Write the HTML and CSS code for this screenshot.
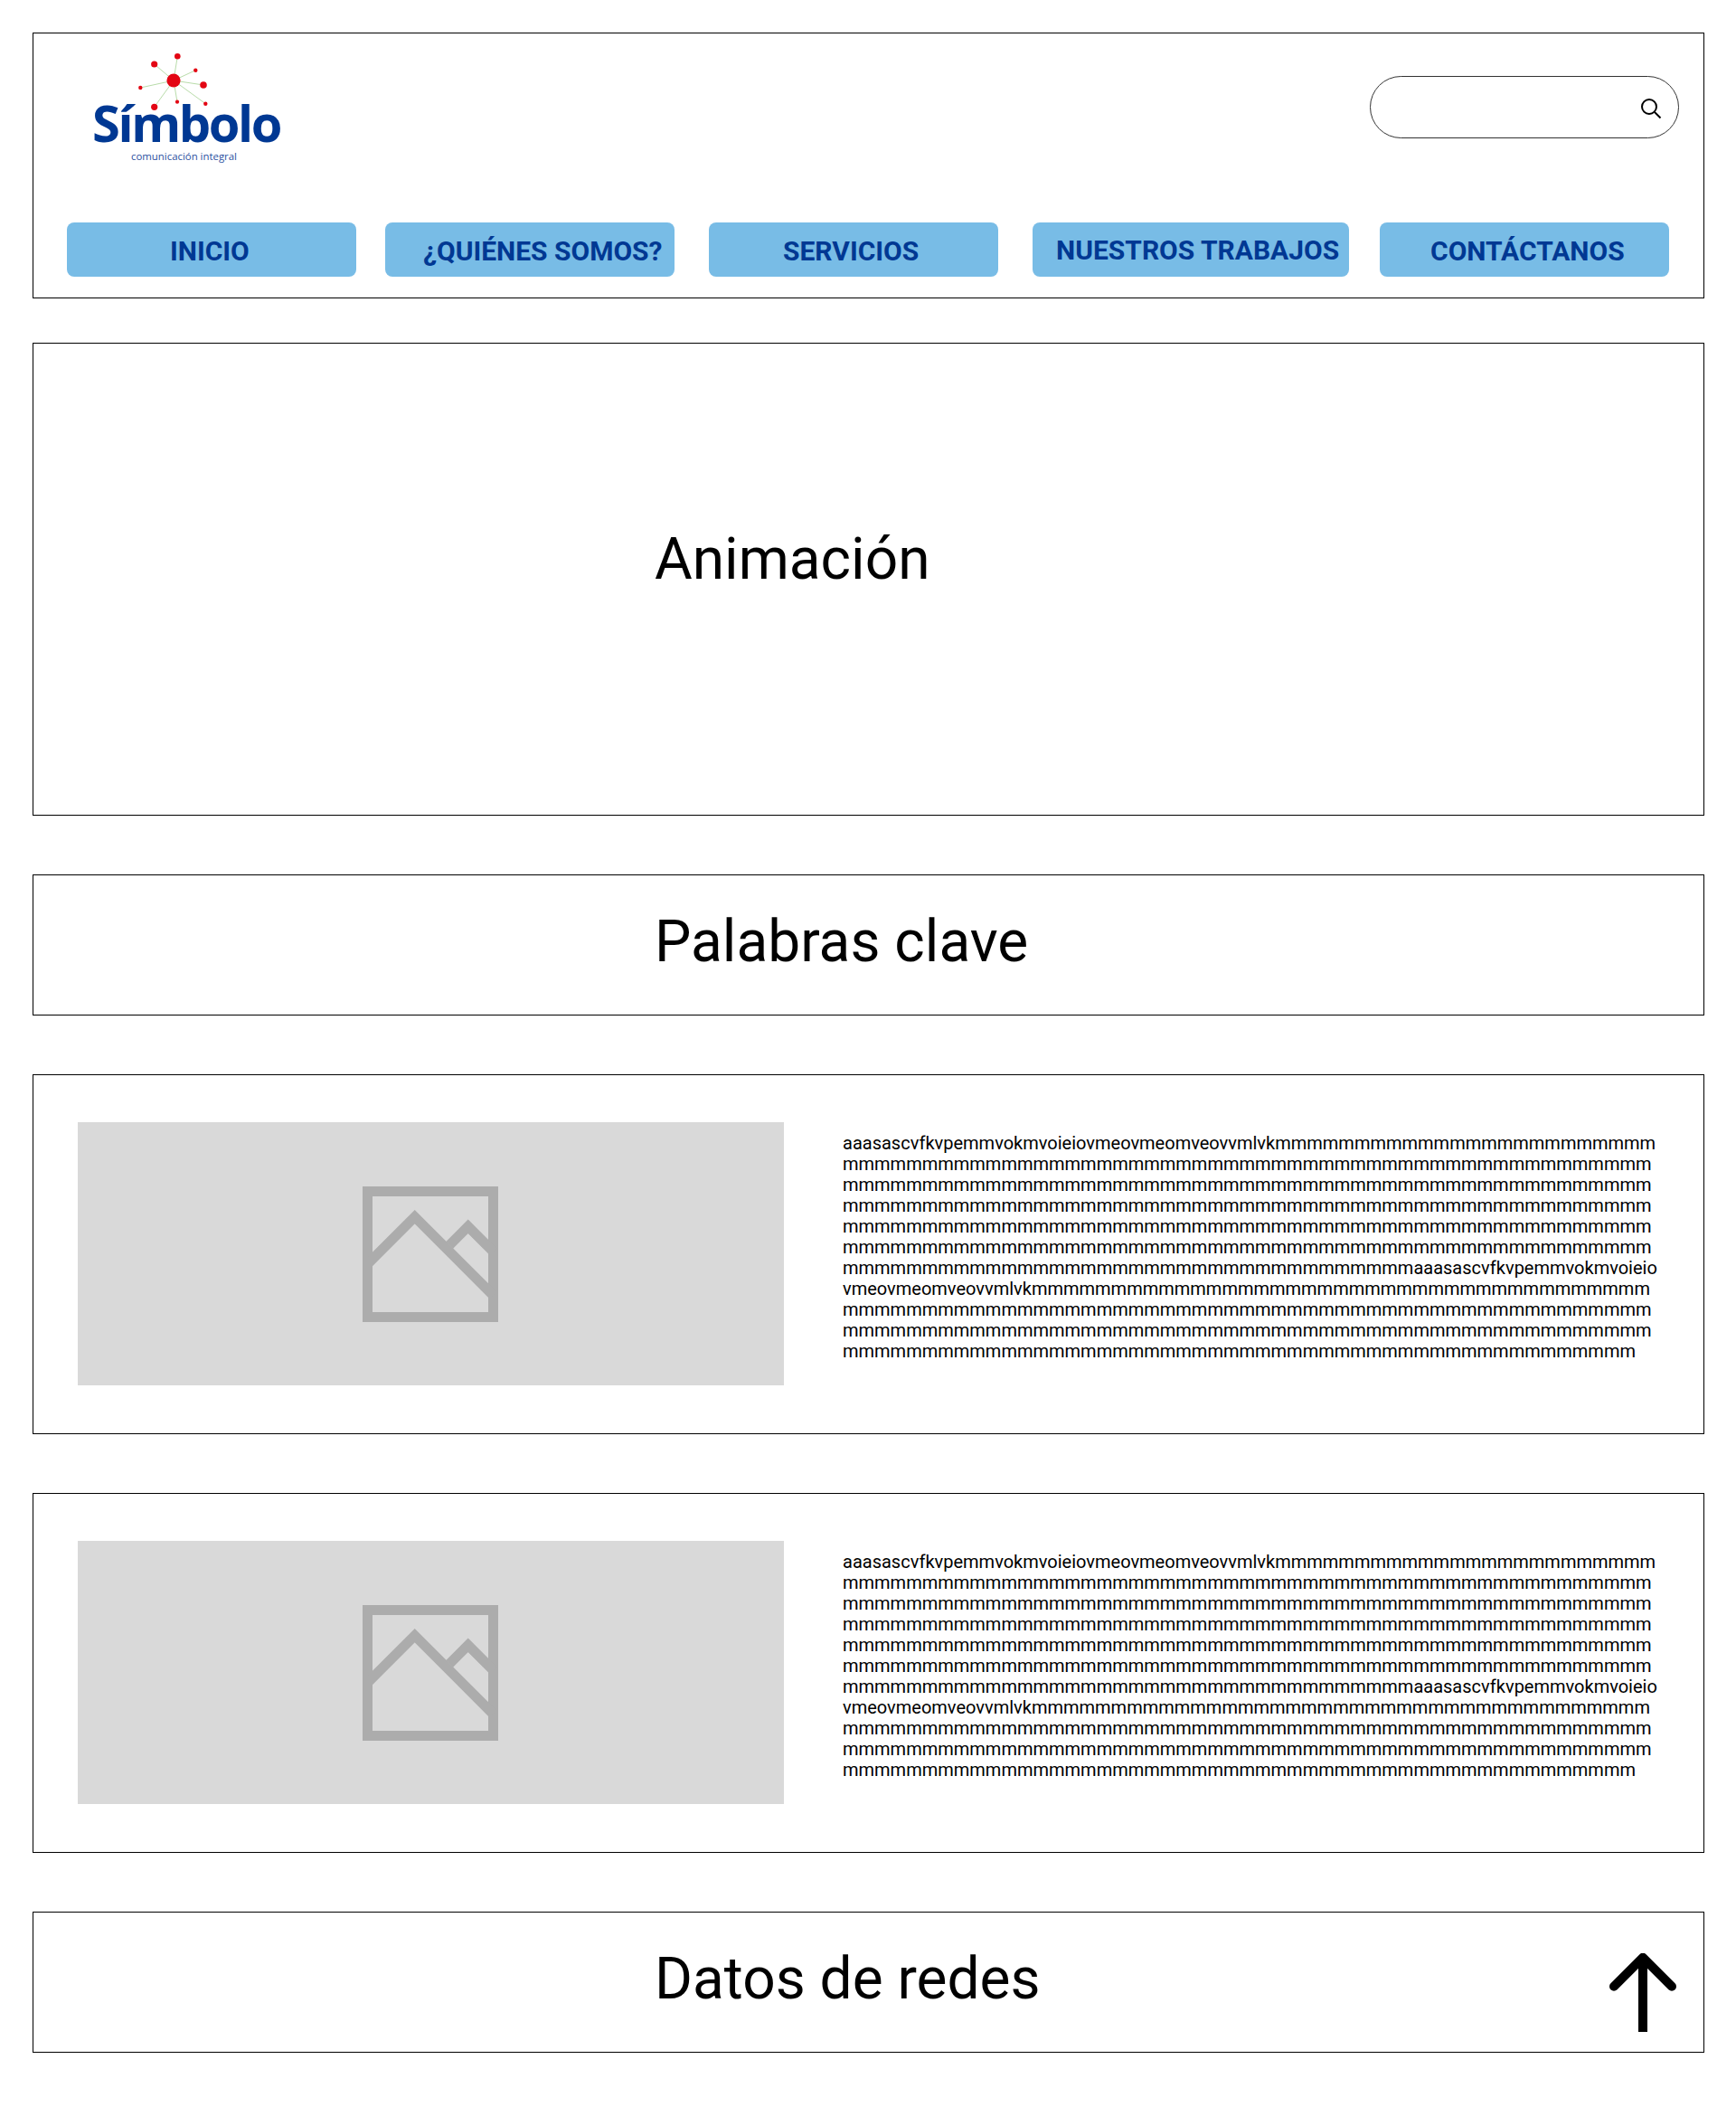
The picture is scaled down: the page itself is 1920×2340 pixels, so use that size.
FILE: index.html
```html
<!DOCTYPE html>
<html lang="es">
<head>
    <meta charset="UTF-8">
    <meta name="viewport" content="width=device-width, initial-scale=1.0">
    <title>Símbolo</title>
    <link rel="stylesheet" href="styles.css">
</head>
<body>
    <header class="box header">
        <div class="header-top">
            <div class="logo">
                <svg class="logo-mark" width="80" height="66" viewBox="0 0 80 66">
                    <g stroke="#b9dcaa" stroke-width="1">
                        <line x1="41" y1="33" x2="45.3" y2="6.3"/>
                        <line x1="41" y1="33" x2="19.7" y2="15"/>
                        <line x1="41" y1="33" x2="65.3" y2="21.7"/>
                        <line x1="41" y1="33" x2="74" y2="38"/>
                        <line x1="41" y1="33" x2="76.3" y2="58.7"/>
                        <line x1="41" y1="33" x2="45" y2="56.7"/>
                        <line x1="41" y1="33" x2="19.7" y2="62.3"/>
                        <line x1="41" y1="33" x2="4.3" y2="41"/>
                    </g>
                    <g fill="#e30613">
                        <circle cx="41" cy="33" r="7.6"/>
                        <circle cx="45.3" cy="6.3" r="3.3"/>
                        <circle cx="19.7" cy="15" r="3.6"/>
                        <circle cx="65.3" cy="21.7" r="2.2"/>
                        <circle cx="74" cy="38" r="3.8"/>
                        <circle cx="76.3" cy="58.7" r="2.2"/>
                        <circle cx="45" cy="56.7" r="2.1"/>
                        <circle cx="19.7" cy="62.3" r="3.6"/>
                        <circle cx="4.3" cy="41" r="2.2"/>
                    </g>
                </svg>
                <div class="logo-name">Símbolo</div>
                <div class="logo-tag">comunicación integral</div>
            </div>
            <div class="search">
                <svg width="24" height="24" viewBox="0 0 24 24" fill="none" stroke="#000" stroke-width="2">
                    <circle cx="10" cy="10" r="8"/>
                    <line x1="16" y1="16" x2="22.5" y2="22.5"/>
                </svg>
            </div>
        </div>
        <nav class="nav">
            <a class="nav-btn nav-inicio">INICIO</a>
            <a class="nav-btn nav-quienes">¿QUIÉNES SOMOS?</a>
            <a class="nav-btn nav-servicios">SERVICIOS</a>
            <a class="nav-btn nav-trabajos">NUESTROS TRABAJOS</a>
            <a class="nav-btn nav-contacto">CONTÁCTANOS</a>
        </nav>
    </header>

    <section class="box hero">
        <h2 class="title">Animación</h2>
    </section>

    <section class="box band">
        <h2 class="title">Palabras clave</h2>
    </section>

    <section class="box content">
        <div class="placeholder">
            <svg width="150" height="150" viewBox="0 0 150 150" fill="none" stroke="#acacac" stroke-width="11">
                <rect x="5.5" y="5.5" width="139" height="139"/>
                <polyline points="5.5,85.9 57.7,33.7 144.5,120.5"/>
                <polyline points="96.2,64.8 116.7,44.3 144.5,72.1"/>
            </svg>
        </div>
        <p class="text">aaasascvfkvpemmvokmvoieiovmeovmeomveovvmlvkmmmmmmmmmm<wbr>mmmmmmmmmm<wbr>mmmm<br>
mmmmmmmmmm<wbr>mmmmmmmmmm<wbr>mmmmmmmmmm<wbr>mmmmmmmmmm<wbr>mmmmmmmmmm<wbr>m<br>
mmmmmmmmmm<wbr>mmmmmmmmmm<wbr>mmmmmmmmmm<wbr>mmmmmmmmmm<wbr>mmmmmmmmmm<wbr>m<br>
mmmmmmmmmm<wbr>mmmmmmmmmm<wbr>mmmmmmmmmm<wbr>mmmmmmmmmm<wbr>mmmmmmmmmm<wbr>m<br>
mmmmmmmmmm<wbr>mmmmmmmmmm<wbr>mmmmmmmmmm<wbr>mmmmmmmmmm<wbr>mmmmmmmmmm<wbr>m<br>
mmmmmmmmmm<wbr>mmmmmmmmmm<wbr>mmmmmmmmmm<wbr>mmmmmmmmmm<wbr>mmmmmmmmmm<wbr>m<br>
mmmmmmmmmm<wbr>mmmmmmmmmm<wbr>mmmmmmmmmm<wbr>mmmmmmaaasascvfkvpemmvokmvoieio<br>
vmeovmeomveovvmlvkmmmmmmmmmm<wbr>mmmmmmmmmm<wbr>mmmmmmmmmm<wbr>mmmmmmmmm<br>
mmmmmmmmmm<wbr>mmmmmmmmmm<wbr>mmmmmmmmmm<wbr>mmmmmmmmmm<wbr>mmmmmmmmmm<wbr>m<br>
mmmmmmmmmm<wbr>mmmmmmmmmm<wbr>mmmmmmmmmm<wbr>mmmmmmmmmm<wbr>mmmmmmmmmm<wbr>m<br>
mmmmmmmmmm<wbr>mmmmmmmmmm<wbr>mmmmmmmmmm<wbr>mmmmmmmmmm<wbr>mmmmmmmmmm</p>
    </section>

    <section class="box content">
        <div class="placeholder">
            <svg width="150" height="150" viewBox="0 0 150 150" fill="none" stroke="#acacac" stroke-width="11">
                <rect x="5.5" y="5.5" width="139" height="139"/>
                <polyline points="5.5,85.9 57.7,33.7 144.5,120.5"/>
                <polyline points="96.2,64.8 116.7,44.3 144.5,72.1"/>
            </svg>
        </div>
        <p class="text">aaasascvfkvpemmvokmvoieiovmeovmeomveovvmlvkmmmmmmmmmm<wbr>mmmmmmmmmm<wbr>mmmm<br>
mmmmmmmmmm<wbr>mmmmmmmmmm<wbr>mmmmmmmmmm<wbr>mmmmmmmmmm<wbr>mmmmmmmmmm<wbr>m<br>
mmmmmmmmmm<wbr>mmmmmmmmmm<wbr>mmmmmmmmmm<wbr>mmmmmmmmmm<wbr>mmmmmmmmmm<wbr>m<br>
mmmmmmmmmm<wbr>mmmmmmmmmm<wbr>mmmmmmmmmm<wbr>mmmmmmmmmm<wbr>mmmmmmmmmm<wbr>m<br>
mmmmmmmmmm<wbr>mmmmmmmmmm<wbr>mmmmmmmmmm<wbr>mmmmmmmmmm<wbr>mmmmmmmmmm<wbr>m<br>
mmmmmmmmmm<wbr>mmmmmmmmmm<wbr>mmmmmmmmmm<wbr>mmmmmmmmmm<wbr>mmmmmmmmmm<wbr>m<br>
mmmmmmmmmm<wbr>mmmmmmmmmm<wbr>mmmmmmmmmm<wbr>mmmmmmaaasascvfkvpemmvokmvoieio<br>
vmeovmeomveovvmlvkmmmmmmmmmm<wbr>mmmmmmmmmm<wbr>mmmmmmmmmm<wbr>mmmmmmmmm<br>
mmmmmmmmmm<wbr>mmmmmmmmmm<wbr>mmmmmmmmmm<wbr>mmmmmmmmmm<wbr>mmmmmmmmmm<wbr>m<br>
mmmmmmmmmm<wbr>mmmmmmmmmm<wbr>mmmmmmmmmm<wbr>mmmmmmmmmm<wbr>mmmmmmmmmm<wbr>m<br>
mmmmmmmmmm<wbr>mmmmmmmmmm<wbr>mmmmmmmmmm<wbr>mmmmmmmmmm<wbr>mmmmmmmmmm</p>
    </section>

    <footer class="box band footer">
        <h2 class="title">Datos de redes</h2>
        <svg class="arrow" width="74" height="87" viewBox="0 0 74 87" fill="none" stroke="#000" stroke-width="10">
            <line x1="37" y1="5" x2="37" y2="87"/>
            <polyline points="5,36.7 37,4.7 69,36.7" stroke-linecap="round" stroke-linejoin="round"/>
        </svg>
    </footer>
</body>
</html>
```

FILE: styles.css
```css
body {
    margin: 0;
    padding: 36px 35px 70px 36px;
    background-color: #fff;
    color: #000;
    font-family: Roboto, sans-serif;
}

.box {
    border: 1px solid #000;
    box-sizing: border-box;
}

/* cabecera */
.header {
    height: 294px;
    padding: 0 27px 0 37px;
}
.header-top {
    display: flex;
    justify-content: space-between;
    height: 209px;
}
.logo {
    padding: 19px 0 0 28px;
}
.logo-mark {
    display: block;
    margin-left: 49px;
}
.logo-name {
    margin-top: -18px;
    font-family: "Open Sans", sans-serif;
    font-size: 56px;
    font-weight: 700;
    line-height: 62px;
    letter-spacing: -2.4px;
    color: #003893;
}
.logo-tag {
    margin: -1px 0 0 43px;
    font-family: "Open Sans", sans-serif;
    font-size: 11.4px;
    line-height: 16px;
    color: #2b50a0;
}
.search {
    display: flex;
    align-items: center;
    justify-content: flex-end;
    box-sizing: border-box;
    width: 342px;
    height: 69px;
    margin-top: 47px;
    padding: 2px 18px 0 0;
    border: 1px solid #333;
    border-radius: 35px;
}

.nav {
    display: flex;
}
.nav-btn {
    box-sizing: border-box;
    width: 320px;
    height: 60px;
    padding-top: 14px;
    border-radius: 8px;
    background-color: #78bce6;
    color: #003893;
    font-size: 30px;
    font-weight: 700;
    line-height: 35px;
    white-space: nowrap;
}
.nav-inicio { padding-left: 114px; }
.nav-quienes { margin-left: 32px; padding-left: 42px; }
.nav-servicios { margin-left: 38px; padding-left: 82px; }
.nav-trabajos { margin-left: 38px; padding-left: 26px; padding-top: 13px; width: 350px; }
.nav-contacto { margin-left: 34px; padding-left: 56px; }

/* secciones */
.title {
    margin: 0;
    font-size: 64px;
    font-weight: 400;
    line-height: 75px;
}
.hero {
    height: 523px;
    margin-top: 49px;
    padding: 201px 0 0 687px;
}
.band {
    height: 156px;
    margin-top: 65px;
    padding: 36px 0 0 687px;
}

.content {
    display: flex;
    gap: 65px;
    height: 398px;
    margin-top: 65px;
    padding: 52px 0 0 49px;
}
.placeholder {
    display: flex;
    align-items: center;
    justify-content: center;
    flex: none;
    box-sizing: border-box;
    width: 781px;
    height: 291px;
    padding: 1px 1px 0 0;
    background-color: #d9d9d9;
}
.text {
    width: 906px;
    margin: 12px 0 0;
    font-size: 20px;
    line-height: 23px;
    white-space: nowrap;
}

.footer {
    display: flex;
    justify-content: space-between;
}
.arrow {
    margin: 9px 30px 0 0;
}
```
